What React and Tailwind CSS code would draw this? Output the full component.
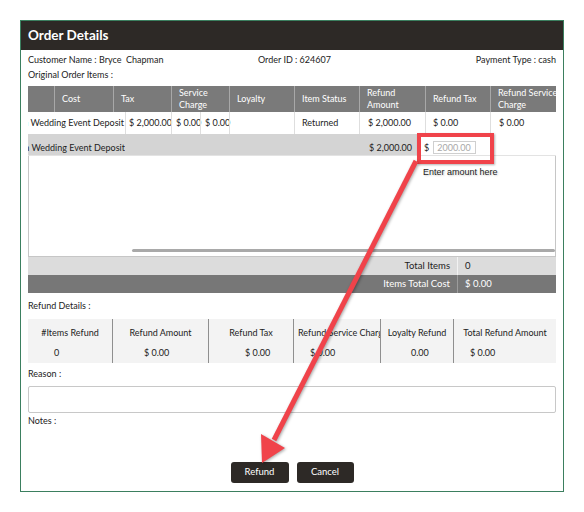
import React from "react";

const hdr = [
  { w: "w-[26px]", t: [""] },
  { w: "w-[59px]", t: ["Cost"] },
  { w: "w-[58px]", t: ["Tax"] },
  { w: "w-[58px]", t: ["Service", "Charge"] },
  { w: "w-[65px]", t: ["Loyalty"] },
  { w: "w-[65px]", t: ["Item Status"] },
  { w: "w-[66px]", t: ["Refund", "Amount"] },
  { w: "w-[65px]", t: ["Refund Tax"] },
  { w: "w-[66px]", t: ["Refund Service", "Charge"] },
];

const row1 = [
  { w: "w-[46px]", t: "$ 2,000.00", p: "pl-[3px]" },
  { w: "w-[29px]", t: "$ 0.00", p: "pl-[4px]" },
  { w: "w-[29px]", t: "$ 0.00", p: "pl-[4px]" },
  { w: "w-[65px]", t: "", p: "pl-[7px]" },
  { w: "w-[65px]", t: "Returned", p: "pl-[7px]" },
  { w: "w-[66px]", t: "$ 2,000.00", p: "pl-[8px]" },
  { w: "w-[65px]", t: "$ 0.00", p: "pl-[7px]" },
  { w: "w-[66px]", t: "$ 0.00", p: "pl-[8px]" },
];

const details = [
  { w: "w-[84px]", l: "#Items Refund", v: "0", vp: "pl-[26px]" },
  { w: "w-[96px]", l: "Refund Amount", v: "$ 0.00", vp: "pl-[31px]" },
  { w: "w-[85px]", l: "Refund Tax", v: "$ 0.00", vp: "pl-[36px]" },
  { w: "w-[87px]", l: "Refund Service Charge", v: "$ 0.00", vp: "pl-[16px]" },
  { w: "w-[73px]", l: "Loyalty Refund", v: "0.00", vp: "pl-[30px]" },
  { w: "w-[103px]", l: "Total Refund Amount", v: "$ 0.00", vp: "pl-[16px]" },
];

export default function App() {
  return (
    <div className="relative w-[584px] h-[512px] bg-white pt-[20px] pl-[20px] font-['Lato',sans-serif] text-[9px] text-[#222]">
      <div className="w-[544px] h-[472px] border border-[#3b7f5f] flex flex-col">
        <div className="h-[29px] shrink-0 bg-[#2d2926] text-white font-bold text-[13.5px] pl-[7px] flex items-center">
          Order Details
        </div>
        <div className="flex flex-col px-[7px]">
          <div className="mt-[2px] h-[15px] flex items-center">
            <div className="w-[230px]">Customer Name : Bryce&nbsp; Chapman</div>
            <div className="flex-1">Order ID : 624607</div>
            <div>Payment Type : cash</div>
          </div>
          <div className="h-[15px] flex items-center">Original Order Items :</div>

          {/* table header */}
          <div className="mt-[4px] h-[26px] flex bg-[#7a7a7a] text-white">
            {hdr.map((h, i) => (
              <div
                key={i}
                className={`${h.w} shrink-0 flex flex-col justify-center pl-[7px] leading-[12px] whitespace-nowrap ${i > 0 ? "border-l border-[#a8a8a8]" : ""}`}
              >
                {h.t.map((line, j) => (
                  <span key={j}>{line}</span>
                ))}
              </div>
            ))}
          </div>

          {/* row 1 */}
          <div className="h-[22px] flex bg-white">
            <div className="w-[97px] shrink-0 flex items-center justify-end overflow-hidden whitespace-nowrap pr-[1px]">
              Bryce Chapman Wedding Event Deposit
            </div>
            {row1.map((c, i) => (
              <div
                key={i}
                className={`${c.w} shrink-0 flex items-center whitespace-nowrap border-l border-[#dedede] ${c.p}`}
              >
                {c.t}
              </div>
            ))}
          </div>

          {/* row 2 */}
          <div className="h-[22px] flex border-b border-[#e3e3e3]">
            <div className="w-[392px] shrink-0 bg-[#d4d4d4] flex items-end">
              <div className="w-[97px] shrink-0 flex justify-end overflow-hidden whitespace-nowrap pr-[0px] leading-[14px]">
                Bryce Chapman Wedding Event Deposit
              </div>
              <div className="ml-[244px] whitespace-nowrap leading-[14px]">$ 2,000.00</div>
            </div>
            <div className="flex-1 flex items-center pl-[4px] pt-[6px]">
              <span>$</span>
              <div className="ml-[4px] w-[43px] h-[13px] border border-[#cfcfcf] bg-white flex items-center pl-[3px] text-[#a8a8a8] leading-[11px]">
                2000.00
              </div>
            </div>
          </div>

          {/* blank body */}
          <div className="h-[101px] border-l border-r border-b border-[#c6c6c6] flex flex-col justify-end">
            <div className="ml-[103px] mb-[4px] h-[3px] rounded-full bg-[#a9a9a9]"></div>
          </div>

          {/* totals */}
          <div className="h-[18px] flex bg-[#dcdcdc] text-[9.5px]">
            <div className="w-[429px] shrink-0 flex items-center justify-end pr-[7px]">Total Items</div>
            <div className="w-px bg-[#f2f2f2]"></div>
            <div className="flex-1 flex items-center pl-[7px]">0</div>
          </div>
          <div className="h-[18px] flex bg-[#777777] text-white text-[9.5px]">
            <div className="w-[429px] shrink-0 flex items-center justify-end pr-[7px]">Items Total Cost</div>
            <div className="w-px bg-[#9c9c9c]"></div>
            <div className="flex-1 flex items-center pl-[7px]">$ 0.00</div>
          </div>

          <div className="mt-[5px] h-[15px] flex items-center">Refund Details :</div>

          <div className="mt-[6px] h-[44px] flex bg-[#f3f3f3]">
            {details.map((d, i) => (
              <div
                key={i}
                className={`${d.w} shrink-0 flex flex-col overflow-hidden ${i > 0 ? "border-l border-[#8f8f8f]" : ""}`}
              >
                <div className="mt-[6px] h-[15px] leading-[15px] text-center whitespace-nowrap overflow-hidden px-[4px]">
                  {d.l}
                </div>
                <div className={`mt-[5px] h-[15px] flex items-center whitespace-nowrap ${d.vp}`}>{d.v}</div>
              </div>
            ))}
          </div>

          <div className="mt-[3px] h-[15px] flex items-center">Reason :</div>
          <div className="mt-[5px] h-[27px] border border-[#c8c8c8] rounded-[2px] bg-white"></div>
          <div className="h-[15px] flex items-center">Notes :</div>

          <div className="mt-[34px] flex justify-center gap-[8px]">
            <button className="w-[58px] h-[21px] rounded-[3px] bg-[#2d2926] text-white text-[9.5px]">Refund</button>
            <button className="w-[57px] h-[21px] rounded-[3px] bg-[#2d2926] text-white text-[9.5px]">Cancel</button>
          </div>
        </div>
      </div>

      {/* annotations */}
      <div className="absolute left-[417px] top-[133px] w-[77px] h-[31px] border-[4px] border-[#f0434a] shadow-[1px_1px_2px_rgba(0,0,0,0.3)]"></div>
      <div className="absolute left-[423px] top-[166px] font-['Liberation_Sans',Arial,sans-serif] text-[9px] text-[#222] [text-shadow:1px_1px_2px_rgba(0,0,0,0.2)]">
        Enter amount here
      </div>
      <svg
        className="absolute left-0 top-0 pointer-events-none"
        width="584"
        height="512"
        viewBox="0 0 584 512"
        style={{ filter: "drop-shadow(1px 1px 1.5px rgba(0,0,0,0.35))" }}
      >
        <line x1="416" y1="161" x2="274" y2="440" stroke="#f0434a" strokeWidth="5" />
        <polygon points="262,463 261,434 285,448" fill="#f0434a" />
      </svg>
    </div>
  );
}
